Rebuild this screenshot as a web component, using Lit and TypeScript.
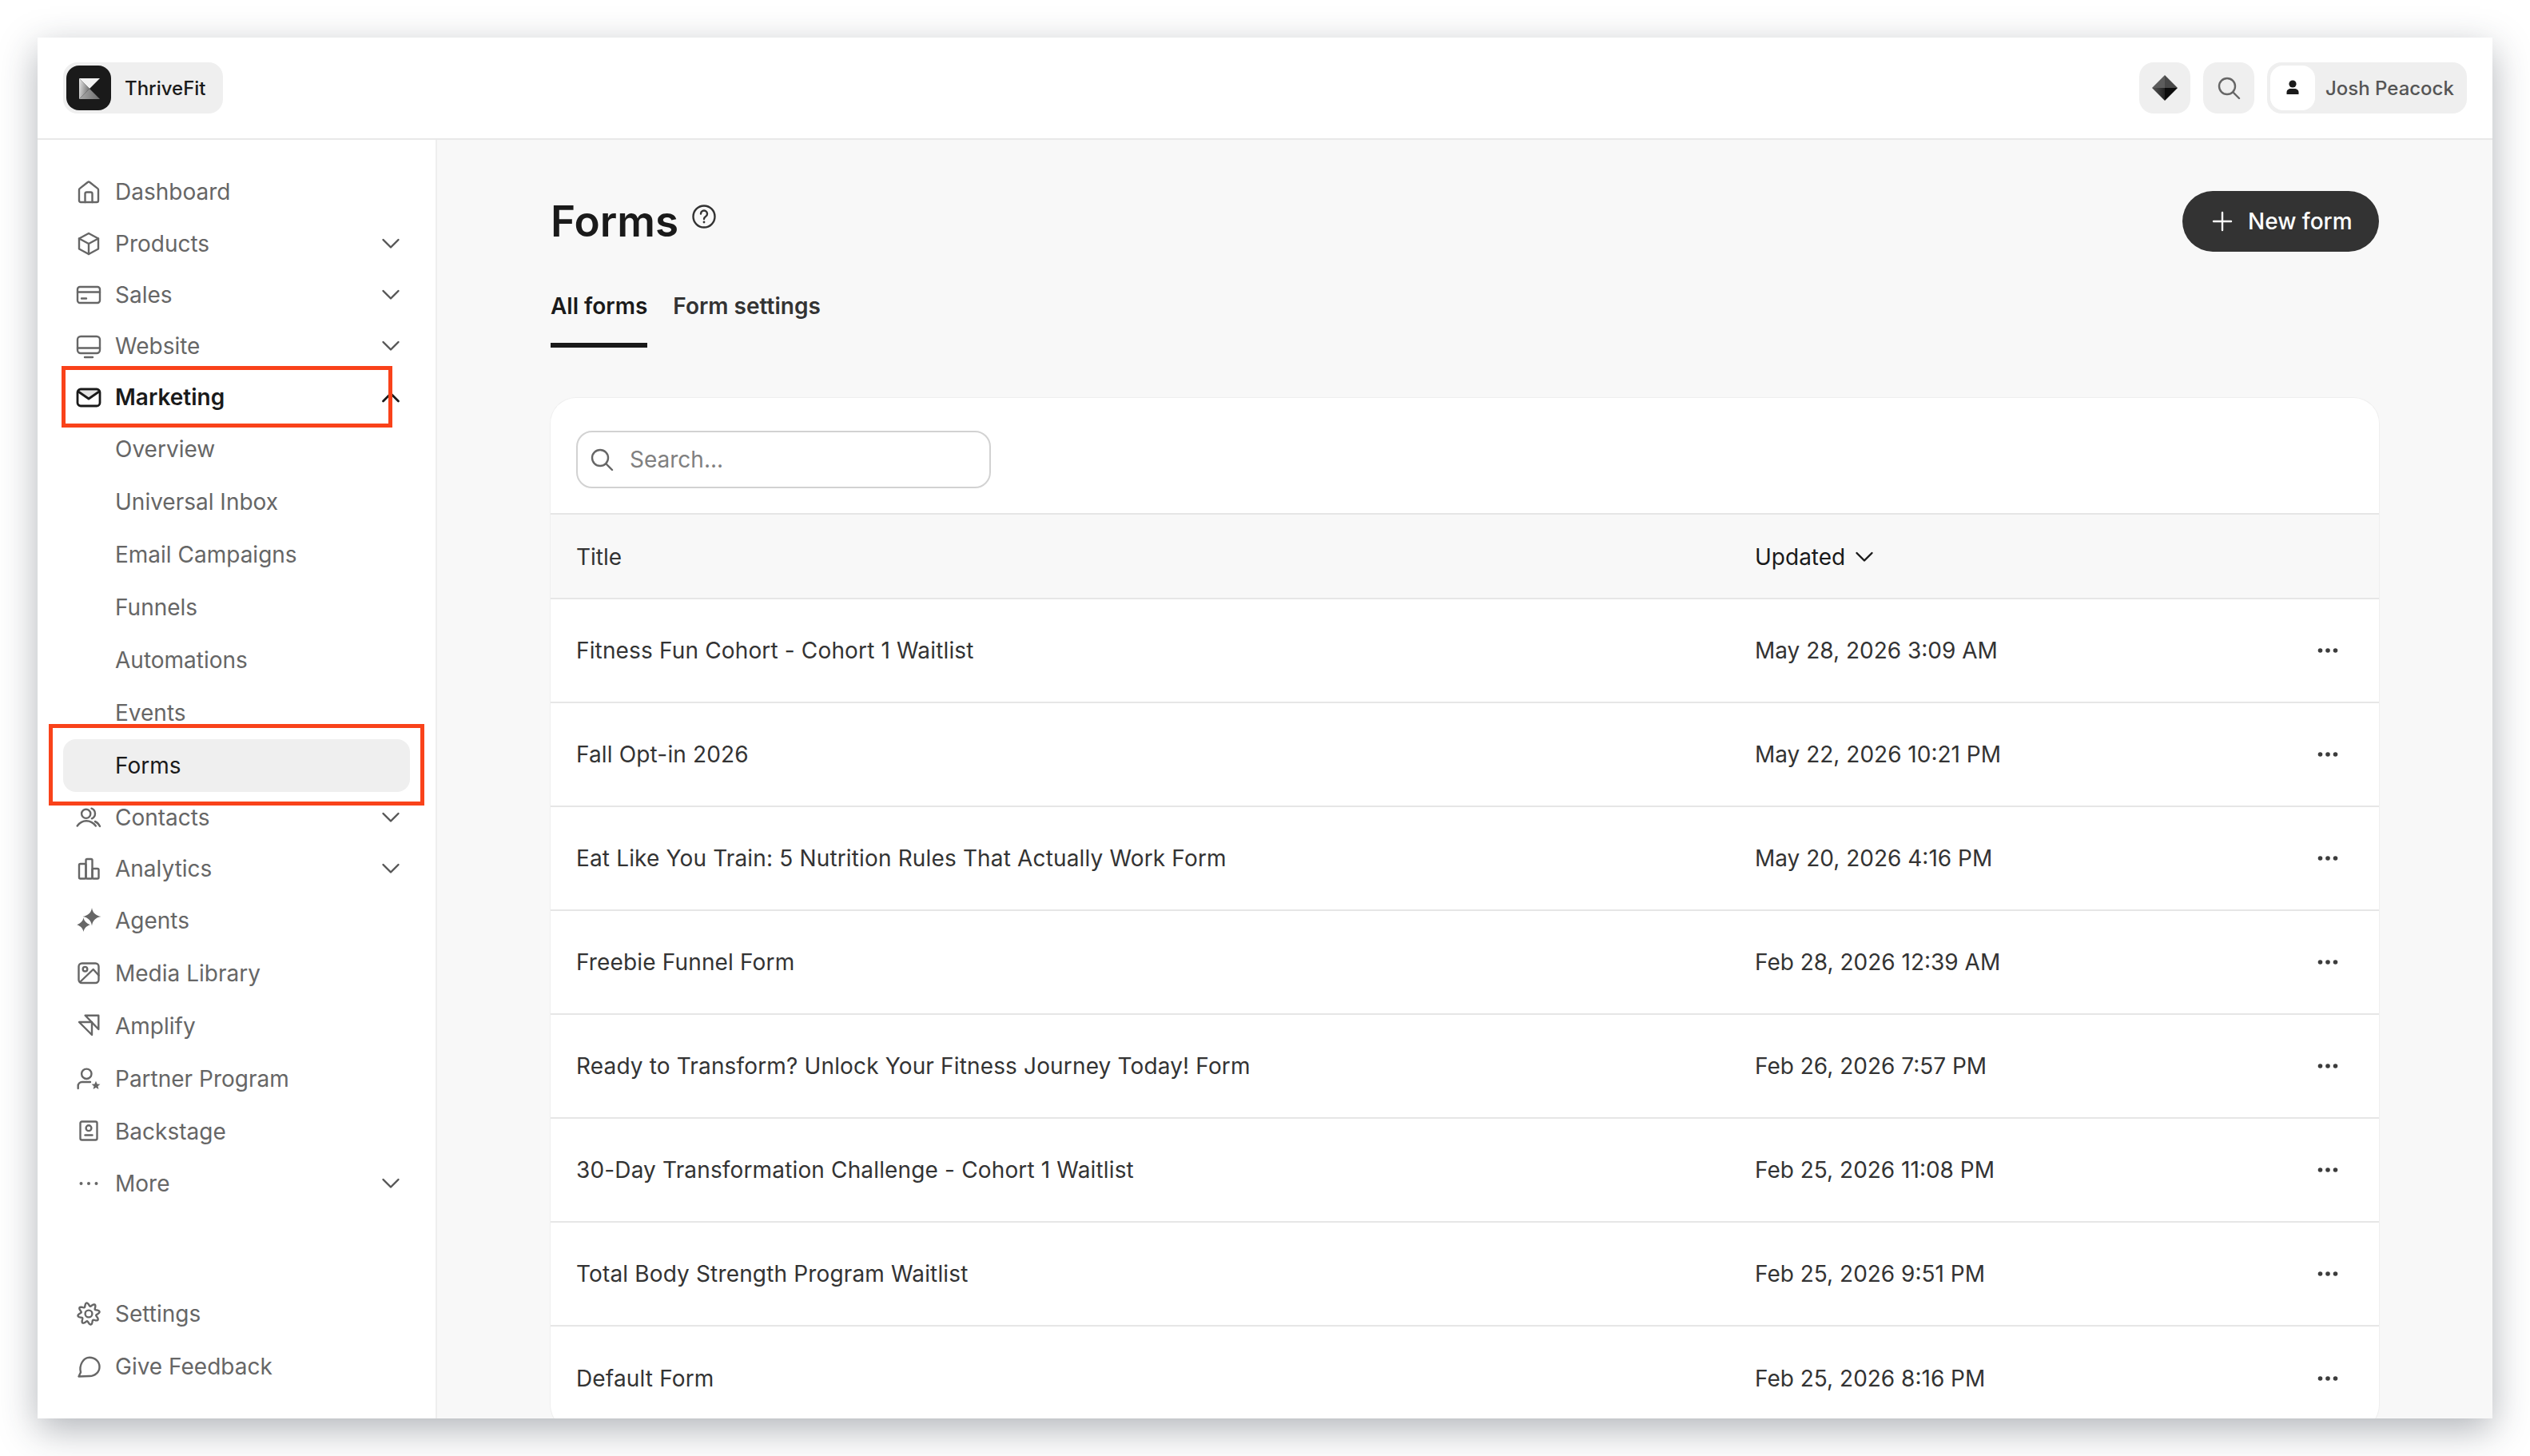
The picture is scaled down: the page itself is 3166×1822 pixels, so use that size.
import { LitElement, html, css, svg } from 'lit';
import { customElement } from 'lit/decorators.js';

// 8 lobes, sampled, good enough for the settings cog
const gearPath = () => {
  const pts: string[] = [];
  for (let i = 0; i < 96; i++) {
    const a = (i / 96) * Math.PI * 2;
    const r = 11.6 + 2.2 * Math.cos(8 * a + Math.PI / 8 * 4);
    pts.push(`${(16 + r * Math.cos(a)).toFixed(2)} ${(16 + r * Math.sin(a)).toFixed(2)}`);
  }
  return 'M' + pts.join('L') + 'Z';
};

const icons: Record<string, unknown> = {
  home: svg`<path d="M4 13.5a2 2 0 0 1 .8-1.6L14.8 4a2 2 0 0 1 2.4 0l10 7.9a2 2 0 0 1 .8 1.6V27a2 2 0 0 1-2 2H6a2 2 0 0 1-2-2Z"/><path d="M11.5 29V18.5a2 2 0 0 1 2-2h5a2 2 0 0 1 2 2V29"/>`,
  box: svg`<path d="M16 3 28 9.5v13L16 29 4 22.5v-13Z"/><path d="M4 9.5 16 16l12-6.5M16 16v13"/>`,
  card: svg`<rect x="2" y="6" width="28" height="20" rx="3"/><path d="M2 12.5h28M7 20.5h6"/>`,
  monitor: svg`<rect x="2" y="4" width="28" height="21" rx="4"/><path d="M2 18.5h28M11 30h10"/>`,
  mail: svg`<path class="soft" d="M4 8h24L16 17Z"/><rect x="2" y="6" width="28" height="21" rx="4"/><path d="M3 9l13 9 13-9"/>`,
  contacts: svg`<circle cx="12.7" cy="11.3" r="5.6"/><path d="M19.5 4.7a6.8 6.8 0 0 1 .4 12.6M1.7 26.5c3-4 7-6.2 11.3-6.2s8.500 2 11.800 6.200M24 21c2.300.8 4.400 3 6 6"/>`,
  analytics: svg`<rect x="4" y="10" width="8.500" height="18.500" rx="1.500"/><rect x="12.500" y="4" width="8" height="24.500" rx="1.500"/><rect x="20.500" y="16" width="8" height="12.500" rx="1.500"/>`,
  agents: svg`<path class="solid" d="M20 0c1 6.300 4.600 9.600 11.500 11-6.900 1.300-10.500 4.600-11.500 11.500C19 15.600 15.400 12.300 8.500 11 15.400 9.600 19 6.300 20 0Z"/><path class="solid" d="M9.500 12.500c.8 4.200 3.700 7 8.300 8.700-4.600 1.500-7.500 4.300-8.300 8.800-.8-4.500-3.700-7.300-8.300-8.800 4.600-1.700 7.500-4.500 8.300-8.700Z"/>`,
  media: svg`<rect x="3.500" y="3.500" width="25" height="24.500" rx="4"/><circle cx="11.500" cy="10.700" r="2.800"/><path d="M5 27 21.700 11l6.800 7.500"/>`,
  amplify: svg`<path d="M4 11h16v16Z"/><path d="M11.700 2.700h16.600V20Z"/>`,
  partner: svg`<circle cx="13.300" cy="9.800" r="6.200"/><path d="M2.700 28v-3c0-3 2.300-5 5-5H18"/><path class="solid" d="m25 18.800 1.600 3.600 3.800.4-2.900 2.500.9 3.800-3.400-2-3.400 2 .9-3.800-2.900-2.500 3.800-.4Z"/>`,
  backstage: svg`<rect x="5.500" y="3.500" width="21" height="23" rx="2"/><circle cx="16" cy="11.700" r="3.400"/><path d="M11.500 20.500h9"/>`,
  more: svg`<circle class="solid" cx="6.500" cy="16" r="2"/><circle class="solid" cx="16" cy="16" r="2"/><circle class="solid" cx="25.500" cy="16" r="2"/>`,
  settings: svg`<path d="${gearPath()}"/><circle cx="16" cy="16" r="4.400"/>`,
  feedback: svg`<path d="M3.500 28.500 6 23.300C3.800 14.500 9 4.800 17 4.800c7 0 12.500 5.200 12.500 11.600S24 28 17 28Z"/>`,
};

const ic = (name: string) => html`<svg class="ic" viewBox="0 0 32 32">${icons[name]}</svg>`;
const chevron = (up = false) =>
  html`<svg class="ic chev" viewBox="0 0 32 32"><path d=${up ? 'M6.500 21 16 11.500 25.500 21' : 'M6.500 11 16 20.500 25.500 11'}/></svg>`;

type NavItem = { label: string; icon?: string; chev?: boolean; up?: boolean; active?: boolean; bold?: boolean };

const nav: NavItem[] = [
  { label: 'Dashboard', icon: 'home' },
  { label: 'Products', icon: 'box', chev: true },
  { label: 'Sales', icon: 'card', chev: true },
  { label: 'Website', icon: 'monitor', chev: true },
  { label: 'Marketing', icon: 'mail', chev: true, up: true, bold: true },
  { label: 'Overview' },
  { label: 'Universal Inbox' },
  { label: 'Email Campaigns' },
  { label: 'Funnels' },
  { label: 'Automations' },
  { label: 'Events' },
  { label: 'Forms', active: true },
  { label: 'Contacts', icon: 'contacts', chev: true },
  { label: 'Analytics', icon: 'analytics', chev: true },
  { label: 'Agents', icon: 'agents' },
  { label: 'Media Library', icon: 'media' },
  { label: 'Amplify', icon: 'amplify' },
  { label: 'Partner Program', icon: 'partner' },
  { label: 'Backstage', icon: 'backstage' },
  { label: 'More', icon: 'more', chev: true },
];

const navBottom: NavItem[] = [
  { label: 'Settings', icon: 'settings' },
  { label: 'Give Feedback', icon: 'feedback' },
];

const forms = [
  ['Fitness Fun Cohort - Cohort 1 Waitlist', 'May 28, 2026 3:09 AM'],
  ['Fall Opt-in 2026', 'May 22, 2026 10:21 PM'],
  ['Eat Like You Train: 5 Nutrition Rules That Actually Work Form', 'May 20, 2026 4:16 PM'],
  ['Freebie Funnel Form', 'Feb 28, 2026 12:39 AM'],
  ['Ready to Transform? Unlock Your Fitness Journey Today! Form', 'Feb 26, 2026 7:57 PM'],
  ['30-Day Transformation Challenge - Cohort 1 Waitlist', 'Feb 25, 2026 11:08 PM'],
  ['Total Body Strength Program Waitlist', 'Feb 25, 2026 9:51 PM'],
  ['Default Form', 'Feb 25, 2026 8:16 PM'],
];

@customElement('app-root')
export class AppRoot extends LitElement {
  static styles = css`
    :host {
      display: block;
      height: 1822px;
      padding: 47px;
      box-sizing: border-box;
      background: #fff;
      font-family: Inter, 'Noto Sans', sans-serif;
      font-size: 28px;
      color: #333;
    }
    * {
      box-sizing: border-box;
    }
    .window {
      position: relative;
      width: 3072px;
      height: 1728px;
      display: flex;
      flex-direction: column;
      overflow: hidden;
      background: #fff;
      box-shadow: 0 14px 44px rgba(40, 46, 62, 0.36);
    }
    .ic {
      flex: none;
      width: 32px;
      height: 32px;
      fill: none;
      stroke: currentColor;
      stroke-width: 2.4;
      stroke-linecap: round;
      stroke-linejoin: round;
    }
    .ic .solid {
      fill: currentColor;
      stroke: none;
    }
    .ic .soft {
      fill: #e4e4e4;
      stroke: none;
    }

    .topbar {
      flex: none;
      height: 128px;
      padding: 0 32px;
      display: flex;
      align-items: center;
      gap: 16px;
      border-bottom: 2px solid #e8e8e8;
    }
    .pill {
      height: 64px;
      display: flex;
      align-items: center;
      background: #efefef;
      border-radius: 18px;
    }
    .brand {
      width: 200px;
      padding-left: 4px;
      gap: 17px;
      margin-right: auto;
      font-size: 24px;
      font-weight: 500;
      color: #1a1a1a;
    }
    .logo {
      width: 56px;
      height: 56px;
      display: block;
    }
    .square {
      width: 64px;
      justify-content: center;
      color: #666;
    }
    .user {
      width: 250px;
      padding-left: 4px;
      gap: 13px;
      font-size: 24px;
      font-weight: 500;
      color: #555;
    }
    .avatar {
      width: 56px;
      height: 56px;
      display: flex;
      align-items: center;
      justify-content: center;
      background: #fff;
      border-radius: 16px;
    }
    .avatar svg {
      width: 24px;
      height: 24px;
      fill: #1a1a1a;
    }
    .diamond {
      width: 32px;
      height: 32px;
    }

    .body {
      flex: 1;
      min-height: 0;
      display: flex;
    }
    aside {
      flex: none;
      width: 500px;
      padding: 32px;
      display: flex;
      flex-direction: column;
      border-right: 2px solid #eee;
    }
    .bottom {
      margin-top: auto;
    }
    .row {
      height: 66px;
      padding: 0 8px 0 16px;
      display: flex;
      align-items: center;
      gap: 17px;
      border-radius: 16px;
      color: #666;
    }
    .row.short {
      height: 64px;
    }
    .row.sub {
      padding-left: 65px;
    }
    .row .label {
      flex: 1;
    }
    .row .chev {
      color: #555;
    }
    .row.bold {
      color: #1a1a1a;
      font-weight: 600;
    }
    .row.bold .ic {
      color: #1a1a1a;
      stroke-width: 2.8;
    }
    .row.active {
      background: #efefef;
      color: #1a1a1a;
    }

    main {
      flex: 1;
      min-width: 0;
      padding: 64px 142px 0;
      background: #f8f8f8;
      overflow: hidden;
    }
    .head {
      display: flex;
      align-items: center;
      gap: 16px;
    }
    h1 {
      margin: 0;
      font-size: 53px;
      font-weight: 600;
      line-height: 76px;
      color: #1a1a1a;
    }
    .help {
      width: 32px;
      height: 32px;
      margin: 0 auto 12px 0;
      color: #333;
    }
    .new {
      width: 246px;
      height: 76px;
      display: flex;
      align-items: center;
      gap: 18px;
      padding-left: 36px;
      background: #333;
      border-radius: 38px;
      color: #fff;
      font-weight: 500;
    }
    .new .ic {
      width: 28px;
      height: 28px;
    }
    .tabs {
      margin-top: 48px;
      display: flex;
      gap: 32px;
      line-height: 40px;
      font-weight: 600;
    }
    .tab {
      padding-bottom: 26px;
      border-bottom: 6px solid transparent;
    }
    .tab.on {
      color: #1a1a1a;
      border-color: #1a1a1a;
    }
    .card {
      margin-top: 63px;
      background: #fff;
      box-shadow: 0 0 0 1px #efefef;
      border-radius: 32px;
      overflow: hidden;
    }
    .search-wrap {
      height: 146px;
      padding: 41px 32px 0;
      border-bottom: 2px solid #e6e6e6;
    }
    .search {
      width: 519px;
      height: 72px;
      padding-left: 14px;
      display: flex;
      align-items: center;
      gap: 19px;
      border: 2px solid #d2d2d2;
      border-radius: 20px;
      color: #808080;
    }
    .search .ic {
      color: #666;
    }
    .table-row {
      display: grid;
      grid-template-columns: 1475px 1fr 32px;
      align-items: center;
      height: 130px;
      padding: 0 48px 0 32px;
      border-bottom: 2px solid #e6e6e6;
    }
    .table-row:last-child {
      border-bottom: none;
    }
    .table-row.th {
      height: 106px;
      padding-top: 1px;
      background: #f8f8f8;
    }
    .title {
      letter-spacing: 0.15px;
    }
    .updated {
      display: flex;
      align-items: center;
      gap: 8px;
      color: #1a1a1a;
    }
    .dots {
      color: #3c3c3c;
    }
    .mark {
      position: absolute;
      border: 5px solid #f9421a;
      pointer-events: none;
    }
    .mark.a {
      left: 30px;
      top: 411px;
      width: 414px;
      height: 77px;
    }
    .mark.b {
      left: 14px;
      top: 859px;
      width: 470px;
      height: 102px;
    }
  `;

  private renderRow(n: NavItem) {
    const cls = ['row', n.chev ? 'short' : '', n.icon ? '' : 'sub', n.bold ? 'bold' : '', n.active ? 'active' : ''].join(' ');
    return html`<div class=${cls}>
      ${n.icon ? ic(n.icon) : ''}
      <span class="label">${n.label}</span>
      ${n.chev ? chevron(n.up) : ''}
    </div>`;
  }

  render() {
    return html`
      <div class="window">
        <header class="topbar">
          <div class="pill brand">
            <svg class="logo" viewBox="0 0 56 56">
              <defs>
                <linearGradient id="lg1" x1="0" y1="0" x2="1" y2="0.3">
                  <stop offset="0" stop-color="#e6e6e6" />
                  <stop offset="1" stop-color="#777" />
                </linearGradient>
                <linearGradient id="lg2" x1="0" y1="0" x2="1" y2="0">
                  <stop offset="0" stop-color="#aaa" />
                  <stop offset="1" stop-color="#6e6e6e" />
                </linearGradient>
              </defs>
              <rect width="56" height="56" rx="16" fill="#1a1a1a" />
              <path d="M16 16H42L29 29Z" fill="#f2f2f2" />
              <path d="M16 16 29 29 16 42Z" fill="url(#lg1)" />
              <path d="M16 42 29 29 42 42Z" fill="url(#lg2)" />
            </svg>
            ThriveFit
          </div>
          <div class="pill square">
            <svg class="diamond" viewBox="0 0 32 32">
              <defs>
                <linearGradient id="dg" x1="0" y1="0" x2="1" y2="0">
                  <stop offset="0" stop-color="#555" />
                  <stop offset="1" stop-color="#222" />
                </linearGradient>
              </defs>
              <path d="M16 0 0 16H16Z" fill="#5c5c5c" />
              <path d="M16 0 32 16H16Z" fill="#484848" />
              <path d="M0 16 16 32V16Z" fill="url(#dg)" />
              <path d="M32 16 16 32V16Z" fill="#0c0c0c" />
            </svg>
          </div>
          <div class="pill square">
            <svg class="ic" viewBox="0 0 32 32"><circle cx="14" cy="14" r="10" /><path d="M21.500 21.500 29 29" /></svg>
          </div>
          <div class="pill user">
            <span class="avatar">
              <svg viewBox="0 0 24 24">
                <circle cx="12" cy="7" r="4.600" />
                <path d="M4.500 20v-2.500c0-3 2.500-4.500 5-4.500h5c2.500 0 5 1.500 5 4.500V20Z" />
              </svg>
            </span>
            Josh Peacock
          </div>
        </header>
        <div class="body">
          <aside>
            <div>${nav.map(n => this.renderRow(n))}</div>
            <div class="bottom">${navBottom.map(n => this.renderRow(n))}</div>
          </aside>
          <main>
            <div class="head">
              <h1>Forms</h1>
              <svg class="ic help" viewBox="0 0 32 32">
                <circle cx="16" cy="16" r="13.500" />
                <path d="M12 12.500a4 4 0 1 1 6 3.500c-1.400.8-2 1.600-2 3" />
                <circle class="solid" cx="16" cy="23" r="1.400" />
              </svg>
              <div class="new">
                <svg class="ic" viewBox="0 0 28 28"><path d="M14 3v22M3 14h22" /></svg>
                New form
              </div>
            </div>
            <div class="tabs">
              <div class="tab on">All forms</div>
              <div class="tab">Form settings</div>
            </div>
            <section class="card">
              <div class="search-wrap">
                <div class="search">
                  <svg class="ic" viewBox="0 0 32 32"><circle cx="14" cy="14" r="10" /><path d="M21.500 21.500 29 29" /></svg>
                  Search...
                </div>
              </div>
              <div class="table-row th">
                <span>Title</span>
                <span class="updated">Updated ${chevron()}</span>
                <span></span>
              </div>
              ${forms.map(
                ([title, date]) => html`<div class="table-row">
                  <span class="title">${title}</span>
                  <span>${date}</span>
                  <svg class="ic dots" viewBox="0 0 32 32">
                    <circle class="solid" cx="6.500" cy="16" r="2.800" />
                    <circle class="solid" cx="16" cy="16" r="2.800" />
                    <circle class="solid" cx="25.500" cy="16" r="2.800" />
                  </svg>
                </div>`
              )}
            </section>
          </main>
        </div>
        <div class="mark a"></div>
        <div class="mark b"></div>
      </div>
    `;
  }
}
